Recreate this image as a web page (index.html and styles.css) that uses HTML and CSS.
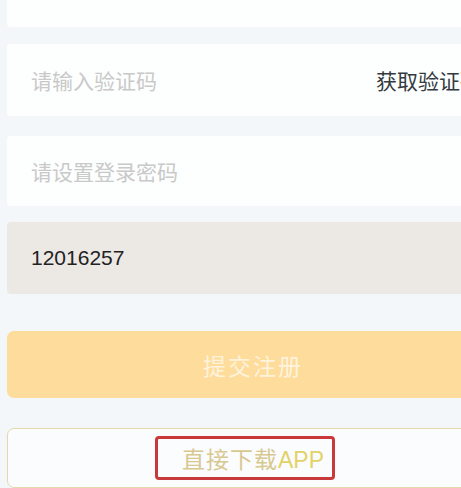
FILE: index.html
```html
<!DOCTYPE html>
<html lang="zh-CN">
<head>
<meta charset="utf-8">
<title>注册</title>
<link rel="stylesheet" href="styles.css">
</head>
<body>
<div class="form">
  <div class="field field-top"></div>
  <div class="field field-code">
    <span class="placeholder">请输入验证码</span>
    <span class="get-code">获取验证码</span>
  </div>
  <div class="field field-pwd">
    <span class="placeholder">请设置登录密码</span>
  </div>
  <div class="field field-invite">
    <span class="value">12016257</span>
  </div>
  <div class="submit">提交注册</div>
  <div class="download">
    <span class="download-text">直接下载<span class="app">APP</span></span>
    <span class="mark"></span>
  </div>
</div>
</body>
</html>
```
FILE: styles.css
```css
html, body {
  margin: 0;
  padding: 0;
  background: #f4f7f9;
  overflow: hidden;
}
body {
  width: 461px;
  height: 488px;
  font-family: "Liberation Sans", "Noto Sans CJK SC", sans-serif;
}
.form {
  width: 490px;
  margin-left: 7px;
  display: flex;
  flex-direction: column;
}
.field {
  background: #fdfefe;
  border-radius: 4px;
  display: flex;
  align-items: center;
  justify-content: space-between;
  padding: 0 16px 0 24px;
  font-size: 21px;
}
.field-top {
  height: 27px;
  border-radius: 0 0 4px 4px;
}
.field-code {
  margin-top: 17px;
  height: 72px;
}
.field-pwd {
  margin-top: 20px;
  height: 70px;
}
.field-invite {
  margin-top: 16px;
  height: 72px;
  background: #ece9e5;
}
.placeholder {
  color: #c9c9c9;
}
.get-code {
  color: #333a40;
}
.value {
  color: #222;
  font-size: 21px;
}
.submit {
  margin-top: 37px;
  height: 67px;
  background: #fddc9c;
  border-radius: 7px;
  display: flex;
  align-items: center;
  justify-content: center;
  color: #fff3dc;
  font-size: 23px;
  letter-spacing: 2px;
  padding-left: 2px;
}
.download {
  margin-top: 30px;
  height: 60px;
  box-sizing: border-box;
  border: 1px solid #e4d9a8;
  border-radius: 7px;
  background: #fbfcfd;
  display: flex;
  align-items: center;
  justify-content: center;
  position: relative;
}
.download-text {
  color: #d8c890;
  font-size: 23px;
  letter-spacing: 1px;
  padding-left: 2px;
}
.app {
  color: #e3d268;
  letter-spacing: 0;
}
.mark {
  position: absolute;
  left: 147px;
  top: 7px;
  width: 180px;
  height: 44px;
  box-sizing: border-box;
  border: 3px solid #c8393c;
  border-radius: 4px;
}
```
